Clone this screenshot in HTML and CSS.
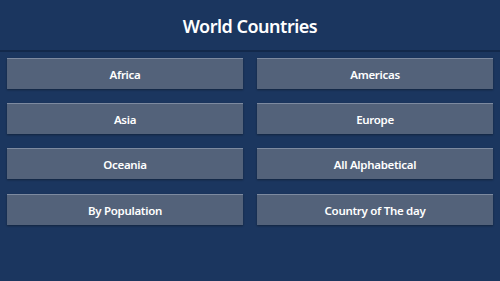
FILE: index.html
```html
<!DOCTYPE html>
<html lang="en">
<head>
  <meta charset="UTF-8" />
  <meta name="viewport" content="width=device-width, initial-scale=1" />
  <title>World Countries</title>
  <link rel="stylesheet" href="styles.css">
</head>
<body>
  <header class="cabecera">
    <h1>World Countries</h1>
  </header>
  <main class="menu">
    <button class="opcion">Africa</button>
    <button class="opcion">Americas</button>
    <button class="opcion">Asia</button>
    <button class="opcion">Europe</button>
    <button class="opcion">Oceania</button>
    <button class="opcion">All Alphabetical</button>
    <button class="opcion">By Population</button>
    <button class="opcion">Country of The day</button>
  </main>
</body>
</html>
```

FILE: styles.css
```css
* {
  margin: 0;
  padding: 0;
  box-sizing: border-box;
  font-family: "Noto Sans", "Open Sans", sans-serif;
}
body {
  width: 500px;
  height: 281px;
  background-color: #1b365f;
  overflow: hidden;
}
.cabecera {
  height: 52px;
  border-bottom: 2px solid #13294b;
  display: flex;
  justify-content: center;
  align-items: center;
  padding-top: 2px;
}
.cabecera h1 {
  color: #ffffff;
  font-size: 18px;
  font-weight: 600;
  letter-spacing: -0.5px;
}
.menu {
  display: grid;
  grid-template-columns: 236px 236px;
  column-gap: 14px;
  row-gap: 14px;
  padding: 6px 7px 0 7px;
}
.opcion {
  height: 31px;
  background-color: #53627a;
  border: none;
  border-top: 1px solid #7d8aa0;
  box-shadow: 0 1px 2px rgba(0, 0, 0, 0.35);
  color: #ffffff;
  font-size: 11.5px;
  font-weight: 600;
  letter-spacing: -0.3px;
  cursor: pointer;
}
.opcion:nth-child(n+7) {
  margin-top: 1px;
}
```
